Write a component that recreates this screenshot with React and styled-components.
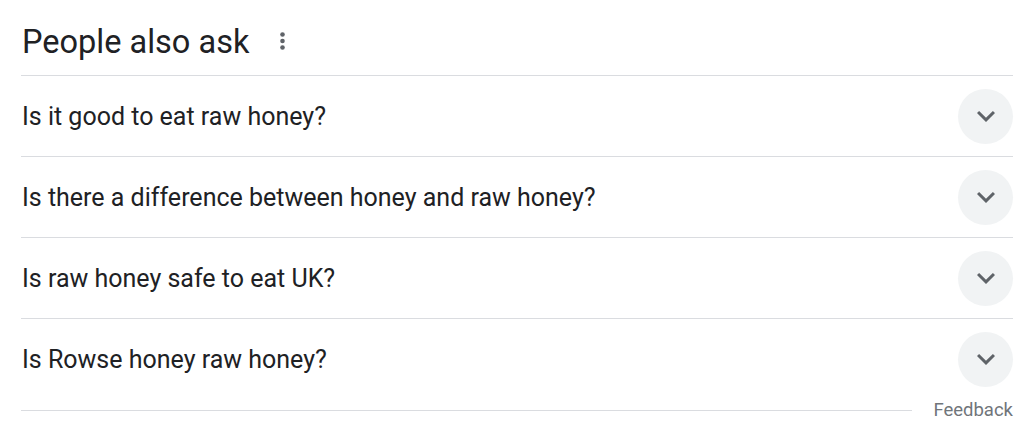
import React from 'react'
import styled, { createGlobalStyle } from 'styled-components'

const GlobalStyle = createGlobalStyle`
    body {
        margin: 0;
        background: #fff;
        font-family: Roboto, "Noto Sans", Arial, sans-serif;
        color: #202124;
    }
`;

const Container = styled.div`
    margin: 0 11px 0 21px;
`;

const Header = styled.div`
    display: flex;
    align-items: center;
    gap: 23px;
    height: 76px;
    padding-left: 1px;
    border-bottom: 1px solid #dadce0;
    box-sizing: border-box;
`;

const Title = styled.h2`
    margin: 8px 0 0;
    font-size: 32.5px;
    font-weight: 400;
    color: #202124;
`;

const Dots = styled.button`
    display: flex;
    align-items: center;
    justify-content: center;
    width: 20px;
    height: 24px;
    margin-top: 6px;
    padding: 0;
    border: none;
    background: none;
    color: #5f6368;
    cursor: pointer;
`;

const Row = styled.div`
    display: flex;
    align-items: center;
    justify-content: space-between;
    height: 80px;
    border-bottom: ${({ last }) => (last ? 'none' : '1px solid #dadce0')};
    cursor: pointer;
`;

const Question = styled.span`
    padding-left: 1px;
    font-size: 25px;
    color: #202124;
`;

const Toggle = styled.div`
    display: flex;
    align-items: center;
    justify-content: center;
    width: 55px;
    height: 55px;
    border-radius: 50%;
    background: #f1f3f4;
    color: #5f6368;
`;

const Footer = styled.div`
    display: flex;
    align-items: center;
    gap: 21px;
`;

const Hr = styled.div`
    flex: 1;
    height: 1px;
    background: #dadce0;
`;

const Feedback = styled.span`
    font-size: 18.5px;
    color: #70757a;
    cursor: pointer;
`;

const questions = [
    'Is it good to eat raw honey?',
    'Is there a difference between honey and raw honey?',
    'Is raw honey safe to eat UK?',
    'Is Rowse honey raw honey?',
]

const MoreIcon = () => (
    <svg width="5" height="18" viewBox="0 0 5 18" fill="currentColor">
        <circle cx="2.5" cy="2.5" r="2.3" />
        <circle cx="2.5" cy="9" r="2.3" />
        <circle cx="2.5" cy="15.5" r="2.3" />
    </svg>
)

const Chevron = () => (
    <svg width="36" height="36" viewBox="0 0 24 24" fill="currentColor">
        <path d="M16.59 8.59 12 13.17 7.41 8.59 6 10l6 6 6-6z" />
    </svg>
)

const App = () => {
    return (
        <>
            <GlobalStyle />
            <Container>
                <Header>
                    <Title>People also ask</Title>
                    <Dots><MoreIcon /></Dots>
                </Header>
                {questions.map((q, i) => (
                    <Row key={q} last={i === questions.length - 1}>
                        <Question>{q}</Question>
                        <Toggle><Chevron /></Toggle>
                    </Row>
                ))}
                <Footer>
                    <Hr />
                    <Feedback>Feedback</Feedback>
                </Footer>
            </Container>
        </>
    )
}

export default App
